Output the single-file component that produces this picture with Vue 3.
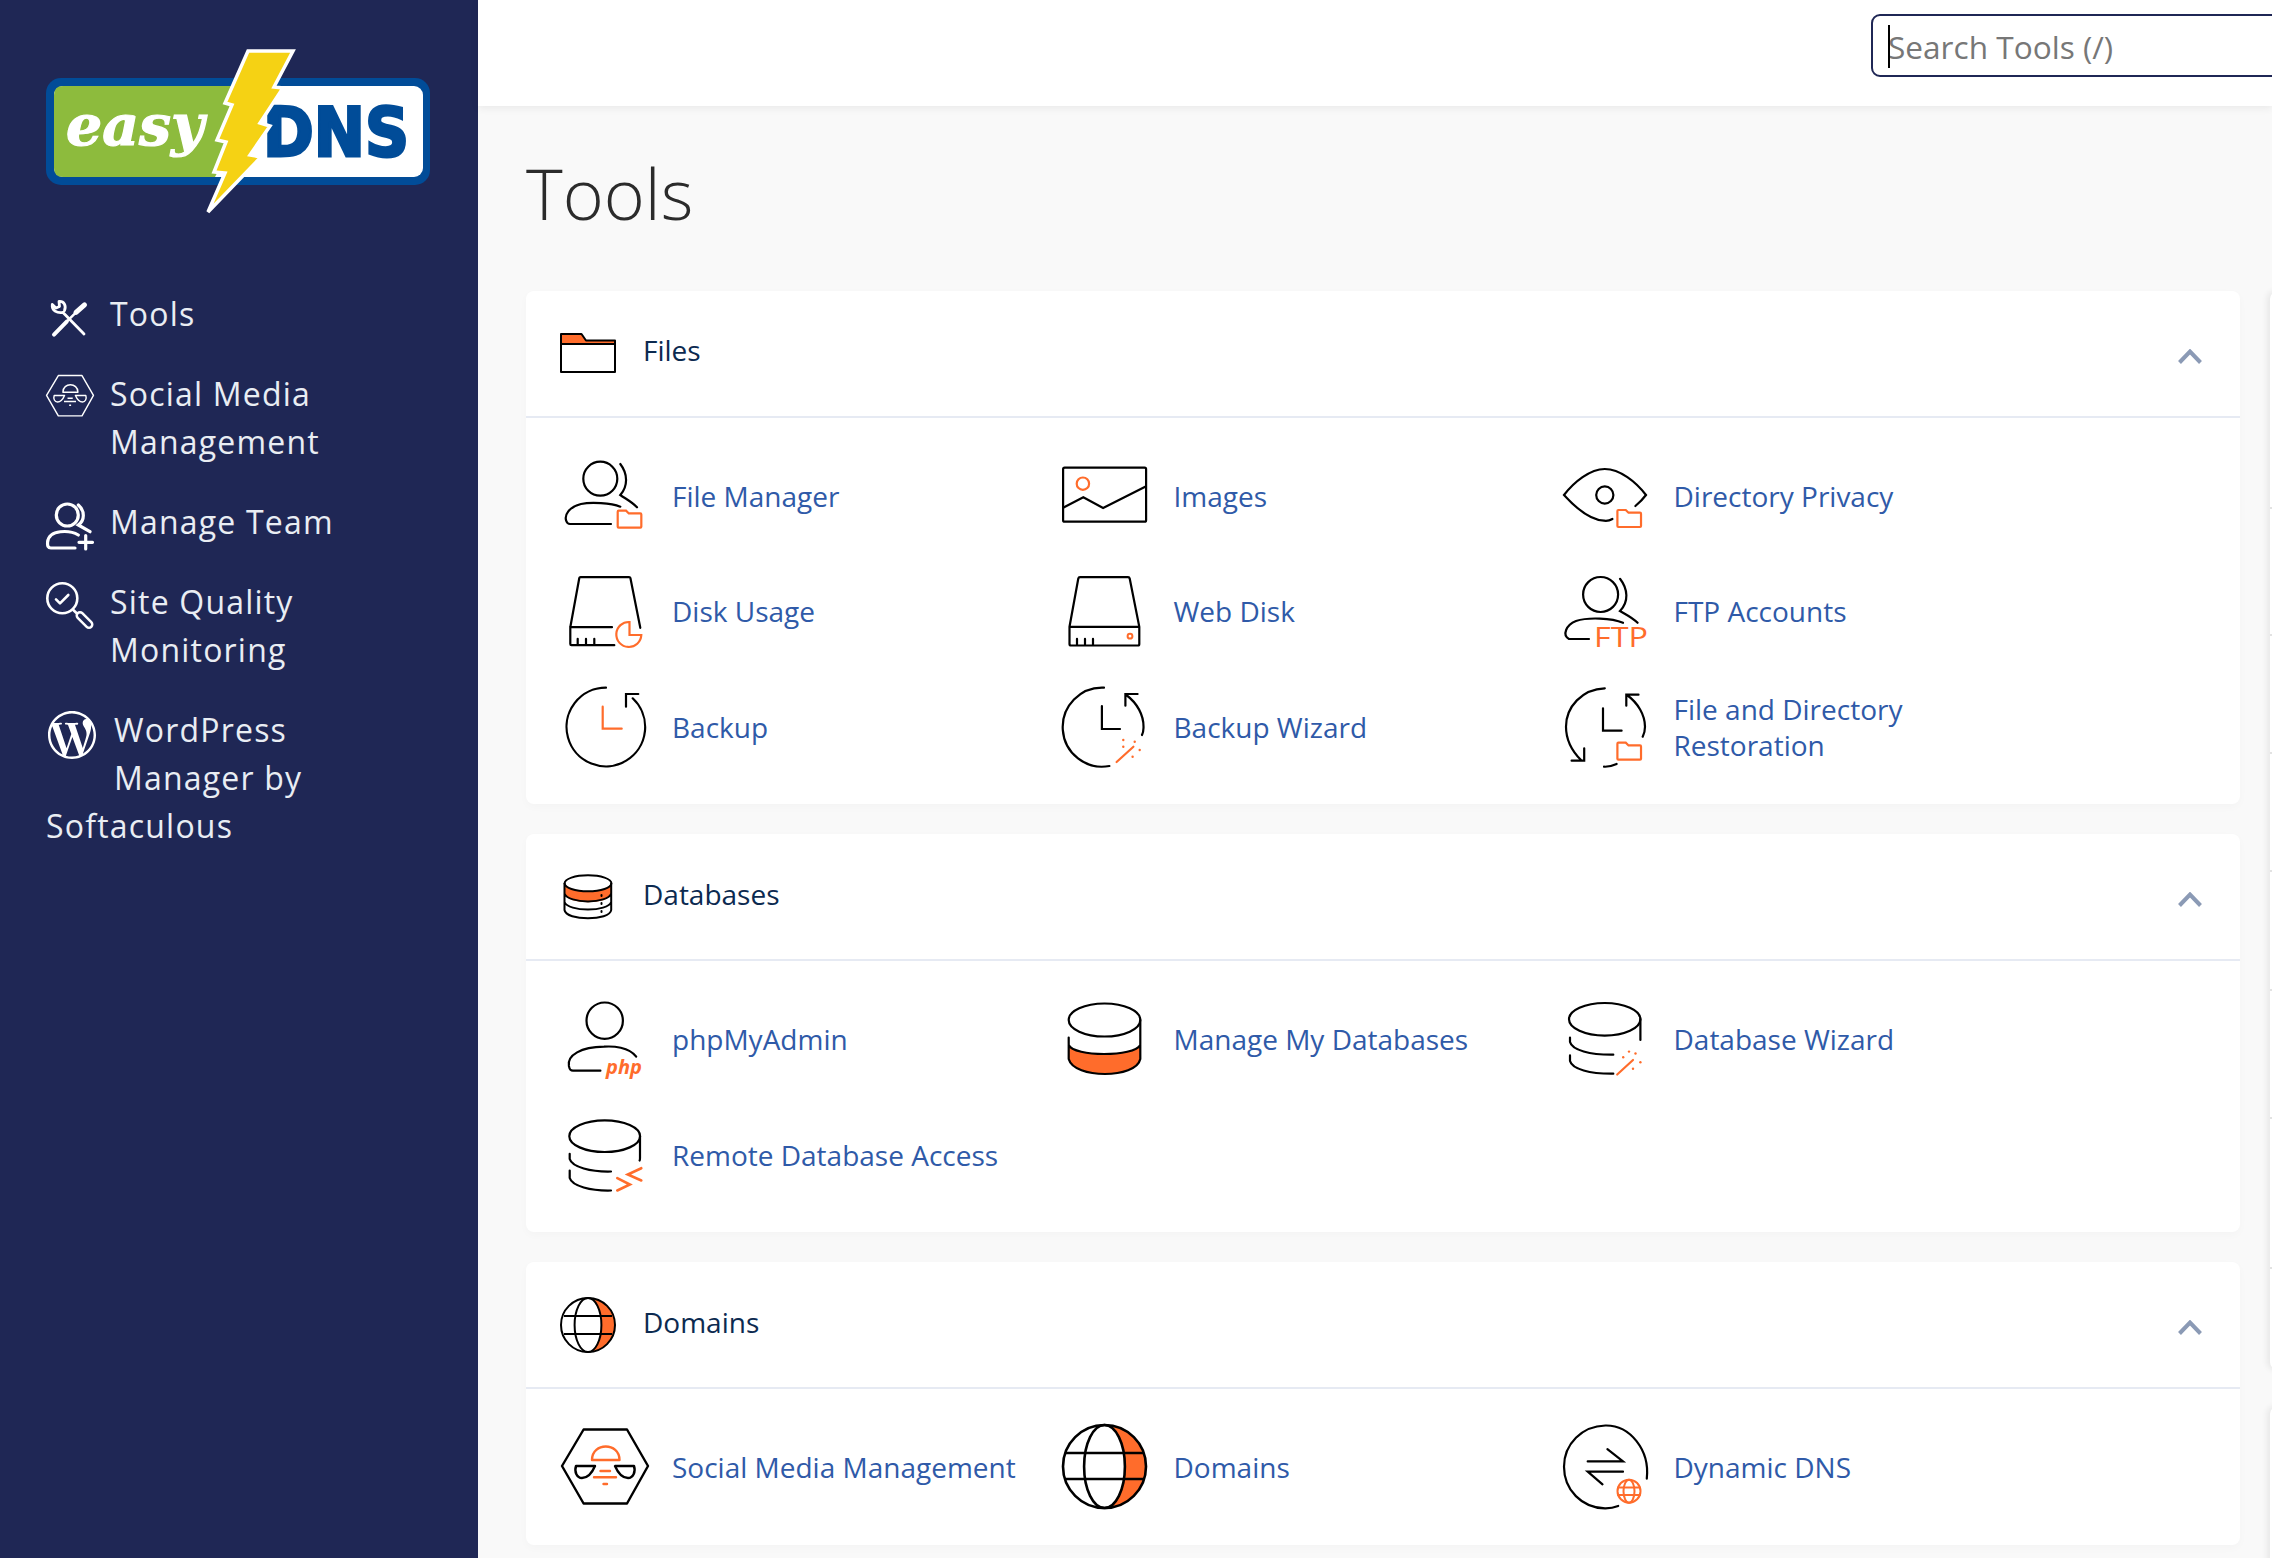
<script setup>
const O = '#ff6c2b'

// small orange overlays shared by several icons
const folder = (x, y, w = 23, h = 17) =>
  `<path stroke="${O}" d="M${x} ${y + h - 1}V${y + 1}q0-1 1-1h${w * 0.32}l${w * 0.12} ${h * 0.16}h${w * 0.5}q1 0 1 1V${y + h - 1}q0 1-1 1H${x + 1}q-1 0-1-1z"/>`
const wand = (x1, y1, x2, y2, dots) =>
  `<path stroke="${O}" d="M${x1} ${y1}L${x2} ${y2}"/>` +
  dots.map(d => `<circle cx="${d[0]}" cy="${d[1]}" r="1.2" fill="${O}" stroke="none"/>`).join('')

const globe = (r, c, cy, rx, y1, y2) =>
  `<path fill="${O}" stroke="none" d="M${c} ${cy - r}A${r} ${r} 0 0 1 ${c} ${cy + r}A${rx} ${r} 0 0 0 ${c} ${cy - r}z"/>` +
  `<circle cx="${c}" cy="${cy}" r="${r}"/><ellipse cx="${c}" cy="${cy}" rx="${rx}" ry="${r}"/>` +
  `<path d="M${c - r + 3} ${y1}H${c + r - 3}M${c - r + 3} ${y2}H${c + r - 3}"/>`

const social = (accent, sw) => `
  <g stroke-width="${sw}" stroke-linejoin="round">
    <path d="M1 41L22.6 4.5H66L87 41L66 78.5H22.6z"/>
    <path stroke="${accent}" d="M31 35C31 17 58.5 17 58.5 35zM39.5 46H49M33 52.2H55M42.5 59H46"/>
    <path d="M15 41H34C31 48 27 53 21 53C16 53 13 47 15 41zM54 41H73C75 47 72 53 67 53C61 53 57 48 54 41z"/>
  </g>`

const icons = {
  tools: `<g stroke-linecap="round" stroke-linejoin="round">
      <path stroke-width="2.8" d="M38 44L17 22.5C11 23.5 5.5 20.5 6.3 14.5L10 18L13.5 16.5L13 11.5C18 11 20.5 15.5 18.5 20.5"/>
      <path stroke-width="4" d="M8 44.6L20.7 31.7"/>
      <path stroke-width="2.4" d="M20.7 31.7L30 22.4"/>
      <path stroke-width="5" d="M30 22.4L38.5 14.8"/>
    </g>`,
  socialNav: social('#fff', 2.6),
  team: `<g stroke-width="3.2" stroke-linecap="round">
      <circle cx="21.3" cy="17" r="11"/>
      <path d="M32.3 7C39 13 39 22 32.3 27L44 33.7M32.3 37C24 32 3 31 1.6 44C1.3 48 2 50 5 50H29M39.7 37.5V51M33 44.3H46.5"/>
    </g>`,
  quality: `<g stroke-width="2.6" stroke-linecap="round" stroke-linejoin="round">
      <circle cx="16.3" cy="20.3" r="15"/>
      <path d="M10 21.3L14 25.3L22.3 17M27.3 32L32 36.5"/>
      <path stroke-width="9" d="M34 37.5L43 46.5"/>
      <path stroke="#1f2755" stroke-width="4" d="M34 37.5L43 46.5"/>
    </g>`,
  wordpress: `<path transform="scale(2)" fill="#fff" stroke="none" d="M21.469 6.825c.84 1.537 1.318 3.3 1.318 5.175 0 3.979-2.156 7.456-5.363 9.325l3.295-9.527c.615-1.54.82-2.771.82-3.864 0-.405-.026-.78-.07-1.11m-7.981.105c.647-.03 1.232-.105 1.232-.105.582-.075.514-.93-.067-.899 0 0-1.755.135-2.88.135-1.064 0-2.85-.15-2.85-.15-.585-.03-.661.855-.075.885 0 0 .54.061 1.125.09l1.68 4.605-2.37 7.08L5.354 6.9c.649-.03 1.234-.1 1.234-.1.585-.075.516-.93-.065-.896 0 0-1.746.138-2.874.138-.2 0-.438-.008-.69-.015C4.911 3.15 8.235 1.215 12 1.215c2.809 0 5.365 1.072 7.286 2.833-.046-.003-.091-.009-.141-.009-1.06 0-1.812.923-1.812 1.914 0 .89.513 1.643 1.06 2.531.411.72.89 1.643.89 2.977 0 .915-.354 2-.821 3.479l-1.075 3.585-3.9-11.61.001.014zM12 22.784c-1.059 0-2.081-.153-3.048-.437l3.237-9.406 3.315 9.087c.024.053.05.101.078.149-1.12.393-2.325.609-3.582.609M1.211 12c0-1.564.336-3.05.935-4.39L7.29 21.709C3.694 19.96 1.212 16.271 1.211 12M12 0C5.385 0 0 5.385 0 12s5.385 12 12 12 12-5.385 12-12S18.615 0 12 0"/>`,

  // section headers, 56 box
  folderHead: `<path fill="${O}" stroke="none" d="M1 9H21.5L26 15.5H55V19H1z"/>
    <path stroke-width="2" stroke-linejoin="round" d="M1 19V9H21.5L26 15.5H55V47H1V19H55"/>`,
  dbHead: `<g stroke-width="2">
      <path fill="${O}" stroke="none" d="M4.5 14V25C8 36 48 36 51.2 25V14C48 25 8 25 4.5 14z"/>
      <ellipse cx="28" cy="14.3" rx="23.4" ry="8"/>
      <path d="M4.5 14V41C6 52 50 52 51.2 41V14M4.5 24.5C8 35 48 35 51.2 24.5M4.5 33C8 43 48 43 51.2 33"/>
      <path stroke-dasharray="1 7" stroke-linecap="round" d="M41.5 26V44"/>
    </g>`,
  globeHead: `<g stroke-width="2">${globe(27, 28, 28, 13.4, 19, 37)}</g>`,

  // tools
  fileManager: `<circle cx="39.3" cy="24.7" r="17"/>
    <path d="M59.3 10C67 20 67 32 59.3 41C65 45 71 48 76 53.3M59.3 52.7C50 49 30 48 20 50C8 53 3 61 5.3 67C6 69 7 70 9 70H50"/>${folder(56.7, 56.7)}`,
  diskUsage: `<path d="M9.3 58.2L18.3 9Q18.5 8.2 19.5 8.2H68Q69.2 8.2 69.4 9L79.3 58.8M51 58.2H9.3V75Q9.3 76.2 10.5 76.2H53.3M16.7 69.8V76M25 69.8V76M33.3 69.8V76"/>
    <path stroke="${O}" d="M68.5 53A12.5 12.5 0 1 0 80.3 66H68.5z"/>`,
  backup: `<path d="M45 2.7A39.3 39.3 0 1 0 71.7 13.3M65 21.7V9H77.3"/><path stroke="${O}" d="M41.7 21.7V43.7H60.7"/>`,
  images: `<rect x="1.1" y="13.7" width="83" height="54" rx="1.5"/>
    <path d="M1.1 53.7L21.3 43.3L41.1 54L83.2 32.7"/><circle cx="20.9" cy="29.7" r="6.2" stroke="${O}"/>`,
  webDisk: `<path d="M7.5 57.8L16.3 9.5Q16.6 8.2 18 8.2H66Q67.4 8.2 67.7 9.5L77.3 57.8V75Q77.3 76.5 76 76.5H9Q7.5 76.5 7.5 75zH77.3M15 69.8V76M23 69.8V76M31 69.8V76"/>
    <circle cx="68" cy="67.2" r="2.4" stroke="${O}" stroke-width="2"/>`,
  backupWizard: `<path d="M42 2.7A39.5 39.5 0 1 0 47.4 81M64.3 10C75 18 82 30 81.5 43Q81.4 47 80 50M63.4 20.7V9H75.6M39.9 21V44H58"/>
    ${wand(54.6, 77, 71.4, 61.7, [[61.3, 55], [72.7, 56.7], [61.3, 61.7], [77.7, 65], [70.6, 71.7]])}`,
  dirPrivacy: `<path d="M50.4 65C47 67 44 67 42 66.7C28 66 12 52 2 41C12 28 28 15 42.8 15C58 15 74 28 84 41C81 45 77 49 73.4 52"/>
    <circle cx="42.8" cy="41" r="8.6"/>${folder(55.4, 56)}`,
  ftp: `<circle cx="38.6" cy="25.5" r="17.5"/>
    <path d="M58 9.8C66 20 67 33 58 42C65 46 71 49 75.6 53.8M61 53.8C50 49 26 48 14 52C4 56 0 66 7 70H27"/>
    <text x="32" y="77.8" textLength="54" lengthAdjust="spacingAndGlyphs" fill="${O}" stroke="none" font-family="Open Sans, sans-serif" font-size="27" font-weight="400">FTP</text>`,
  restore: `<path d="M42.8 3.3C20 4 4 22 4 41.7C4 55 10 66 19 75M22.2 63.3V75.7H9.6M65 10C76 18 83 30 83 41.7Q83 47 80.7 51.7M64.3 20.7V9.7H76.5M42 81.7Q48 82 54.6 79M41 23.3V45.7H59.6"/>${folder(55.4, 57.7)}`,
  phpmyadmin: `<ellipse cx="43.7" cy="23.7" rx="18.2" ry="18.2"/>
    <path d="M75.2 59.7C68 50 52 49 43 49.7C20 50 6 58 7.9 69C8.5 72 9 73.7 12 73.7H39.4"/>
    <text x="45" y="77" fill="${O}" stroke="none" font-family="Open Sans, sans-serif" font-size="20" font-weight="700" font-style="italic">php</text>`,
  manageDb: `<path fill="${O}" stroke="none" d="M6.7 48C12 60 72 60 78.3 48V62C74 82 12 82 6.7 62z"/>
    <ellipse cx="42.5" cy="23" rx="35.8" ry="16.5"/>
    <path d="M78.3 23V62C74 82 12 82 6.7 62V40.5M6.7 48C12 60 72 60 78.3 48"/>`,
  dbWizard: `<ellipse cx="42.7" cy="22.3" rx="35.7" ry="16.3"/>
    <path d="M78.4 22V43M8 40.5V45C10 53 28 58 51.3 57.7M8 58.4V64C10 72 28 77 51.3 76.7"/>
    ${wand(55.2, 77.5, 71, 63, [[67, 54.6], [61.2, 60.3], [73.5, 56.5], [78.4, 65.3], [71, 71.8]])}`,
  remoteDb: `<ellipse cx="43.7" cy="23.2" rx="35.4" ry="15.8"/>
    <path d="M79 23V45Q79 47 78.6 47.5M8.7 40.8V46C11 54 30 59 50 58.5M8.7 57.5V65C11 73 30 78 50 77.5"/>
    <path stroke="${O}" stroke-width="2.6" d="M80.3 55.2L66.8 61.5L80.3 67.5M56.3 65.2L68.9 71.5L56.3 77.5"/>`,
  socialItem: social('#ff6c2b', 2.4),
  globeItem: `<g stroke-width="2.6">${globe(41.5, 42.5, 41.5, 20.4, 28, 54)}</g>`,
  dynDns: `<path d="M84.8 53.6C88 25 68 0 43.4 0.5C20 1 2 19 2 41.7C2 65 20 83 43 83.4Q50 83.5 56.2 81M25.7 36.4H61L45.4 24.2M61 46.7H25.7L40.5 59.3"/>
    <g stroke="${O}" stroke-width="2"><circle cx="67" cy="66.2" r="11.5"/><ellipse cx="67" cy="66.2" rx="5.5" ry="11.5"/><path d="M56 62.5H78M56 70H78"/></g>`
}

const nav = [
  { label: 'Tools', icon: 'tools', box: '0 0 48 48' },
  { label: 'Social Media Management', icon: 'socialNav', box: '0 0 88 84', cls: 'nudge' },
  { label: 'Manage Team', icon: 'team', box: '0 0 48 48' },
  { label: 'Site Quality Monitoring', icon: 'quality', box: '0 0 48 48', cls: 'two-line' },
  { label: 'WordPress Manager by Softaculous', icon: 'wordpress', box: '0 0 48 48', cls: 'wp' }
]

const sections = [
  {
    title: 'Files',
    icon: 'folderHead',
    tools: [
      { label: 'File Manager', icon: 'fileManager' },
      { label: 'Images', icon: 'images' },
      { label: 'Directory Privacy', icon: 'dirPrivacy' },
      { label: 'Disk Usage', icon: 'diskUsage' },
      { label: 'Web Disk', icon: 'webDisk' },
      { label: 'FTP Accounts', icon: 'ftp' },
      { label: 'Backup', icon: 'backup' },
      { label: 'Backup Wizard', icon: 'backupWizard' },
      { label: 'File and Directory Restoration', icon: 'restore' }
    ]
  },
  {
    title: 'Databases',
    icon: 'dbHead',
    tools: [
      { label: 'phpMyAdmin', icon: 'phpmyadmin' },
      { label: 'Manage My Databases', icon: 'manageDb' },
      { label: 'Database Wizard', icon: 'dbWizard' },
      { label: 'Remote Database Access', icon: 'remoteDb' }
    ]
  },
  {
    title: 'Domains',
    icon: 'globeHead',
    tools: [
      { label: 'Social Media Management', icon: 'socialItem' },
      { label: 'Domains', icon: 'globeItem' },
      { label: 'Dynamic DNS', icon: 'dynDns' }
    ]
  }
]

// the next column of cards is cut off by the window, only its row rules peek in
const sideRows = [218, 127, 118, 118, 119, 128, 150, 101]
</script>

<template>
  <div class="page">
    <aside class="sidebar">
      <svg class="logo" viewBox="0 0 478 273">
        <rect x="46" y="78" width="384" height="107" rx="15" fill="#014c98" />
        <rect x="54" y="86" width="369" height="91" rx="9" fill="#fff" />
        <path d="M63 86H262L215 177H63Q54 177 54 168V95Q54 86 63 86z" fill="#8dbb3d" />
        <text x="66" y="145" class="logo-easy" textLength="138" lengthAdjust="spacingAndGlyphs">easy</text>
        <text x="263" y="156" class="logo-dns" textLength="146" lengthAdjust="spacingAndGlyphs">DNS</text>
        <path
          d="M248 51H293L274 87L283 88L260 123L270 126L250 155L261 157L208 212L225 173L214 172L226 142L217 140L232 105L225 103z"
          fill="#f5d214"
          stroke="#fff"
          stroke-width="3.5"
        />
      </svg>
      <nav class="nav">
        <a v-for="n in nav" :key="n.label" class="nav-item" :class="n.cls">
          <svg class="nav-icon" :viewBox="n.box" v-html="icons[n.icon]"></svg>
          {{ n.label }}
        </a>
      </nav>
    </aside>

    <div class="main">
      <header class="topbar">
        <div class="search">
          <input class="search-input" type="text" placeholder="Search Tools (/)" />
          <span class="caret"></span>
        </div>
      </header>

      <div class="content">
        <h1 class="page-title">Tools</h1>
        <div class="columns">
          <div class="column">
            <section v-for="s in sections" :key="s.title" class="card">
              <div class="card-head">
                <svg class="head-icon" viewBox="0 0 56 56" v-html="icons[s.icon]"></svg>
                <span class="head-title">{{ s.title }}</span>
                <svg class="chevron" viewBox="0 0 24 15">
                  <path d="M1.5 13.5L12 2.5L22.5 13.5" />
                </svg>
              </div>
              <div class="card-body">
                <a v-for="t in s.tools" :key="t.label" class="tool">
                  <svg class="tool-icon" viewBox="0 0 84 84" v-html="icons[t.icon]"></svg>
                  <span class="tool-label">{{ t.label }}</span>
                </a>
              </div>
            </section>
          </div>
          <div class="column">
            <div class="card side-card">
              <div v-for="(h, i) in sideRows" :key="i" class="side-row" :style="{ height: h + 'px' }"></div>
            </div>
            <div class="card side-card side-last"></div>
          </div>
        </div>
      </div>
    </div>
  </div>
</template>

<style>
html,
body {
  margin: 0;
  padding: 0;
}
</style>

<style scoped>
.page {
  display: flex;
  width: 2272px;
  height: 1558px;
  overflow: hidden;
  font-family: "Open Sans", "Noto Sans", sans-serif;
  background: #f9f9f9;
}

.sidebar {
  flex: 0 0 478px;
  background: #1f2755;
  color: #e9edf3;
}

.logo {
  display: block;
  width: 478px;
  height: 273px;
  margin-bottom: 1px;
}

.logo-easy {
  font-family: "DejaVu Serif", serif;
  font-size: 56px;
  font-weight: 700;
  font-style: italic;
  fill: #fff;
  stroke: #fff;
  stroke-width: 1.2px;
}

.logo-dns {
  font-family: "DejaVu Sans", sans-serif;
  font-size: 67px;
  font-weight: 700;
  fill: #014c98;
  stroke: #014c98;
  stroke-width: 3px;
}

.nav {
  padding: 0 48px 0 46px;
}

.nav-item {
  display: block;
  padding: 16px 0;
  font-size: 32px;
  line-height: 48px;
  letter-spacing: 1.2px;
}

.nav-item::after {
  content: "";
  display: block;
  clear: both;
}

.nav-icon {
  float: left;
  width: 48px;
  height: 48px;
  margin-right: 16px;
  fill: none;
  stroke: #fff;
  overflow: visible;
}

.nudge .nav-icon {
  height: 46px;
  margin-top: 3px;
  margin-bottom: 2px;
}

.two-line .nav-icon {
  margin-bottom: 4px;
}

.wp .nav-icon {
  margin: 5px 18px 0 2px;
}

.main {
  flex: 1;
  min-width: 0;
  display: flex;
  flex-direction: column;
}

.topbar {
  flex: 0 0 106px;
  background: #fff;
  box-shadow: 0 2px 8px rgba(0, 0, 0, 0.07);
  padding: 14px 0 0 1393px;
  box-sizing: border-box;
  position: relative;
  overflow: hidden;
  z-index: 1;
}

.search {
  position: relative;
  width: 700px;
}

.search-input {
  display: block;
  width: 100%;
  height: 63px;
  box-sizing: border-box;
  padding: 2px 15px 0;
  border: 2.5px solid #1f2755;
  border-radius: 9px;
  outline: none;
  font-family: inherit;
  font-size: 31.6px;
  color: #222;
}

.search-input::placeholder {
  color: #777;
  opacity: 1;
}

.caret {
  position: absolute;
  left: 17px;
  top: 11px;
  width: 2px;
  height: 43px;
  background: #000;
}

.content {
  flex: 1;
  padding: 47px 0 0 48px;
}

.page-title {
  margin: 0 0 58px;
  font-size: 70px;
  line-height: 80px;
  font-weight: 300;
  color: #2b2b2b;
}

.columns {
  display: flex;
  gap: 30px;
}

.column {
  flex: 0 0 1714px;
}

.card {
  background: #fff;
  border-radius: 8px;
  box-shadow: 0 3px 10px rgba(0, 0, 0, 0.025);
  margin-bottom: 30px;
}

.card-head {
  display: flex;
  align-items: center;
  height: 124.5px;
  padding: 0 38px 0 34px;
  border-bottom: 2px solid #e6eaf3;
}

.head-icon {
  flex: none;
  width: 56px;
  height: 56px;
  margin-right: 27px;
  fill: none;
  stroke: #000;
  overflow: visible;
}

.head-title {
  flex: 1;
  padding-bottom: 6px;
  font-size: 28px;
  color: #0c2a50;
}

.chevron {
  flex: none;
  width: 24px;
  height: 15px;
  margin-top: 6px;
  fill: none;
  stroke: #8b9ab5;
  stroke-width: 4;
}

.card-body {
  display: grid;
  grid-template-columns: 501.5px 500px 500px;
  grid-auto-rows: 115.5px;
  padding: 20.4px 34px 20.1px 34.5px;
}

.tool {
  display: flex;
  align-items: center;
  gap: 27.5px;
}

.tool-icon {
  flex: none;
  width: 84px;
  height: 84px;
  fill: none;
  stroke: #000;
  stroke-width: 2.2;
  stroke-linecap: round;
  overflow: visible;
}

.tool-label {
  font-size: 28px;
  line-height: 36px;
  color: #2f5aa8;
  max-width: 380px;
}

.side-card {
  box-shadow: -3px 0 6px rgba(0, 0, 0, 0.07);
}

.side-row {
  box-sizing: border-box;
  border-bottom: 2px solid #e2e2e2;
}

.side-row:last-child {
  border-bottom: 0;
}

.side-last {
  height: 300px;
  margin-top: 36px;
}
</style>
